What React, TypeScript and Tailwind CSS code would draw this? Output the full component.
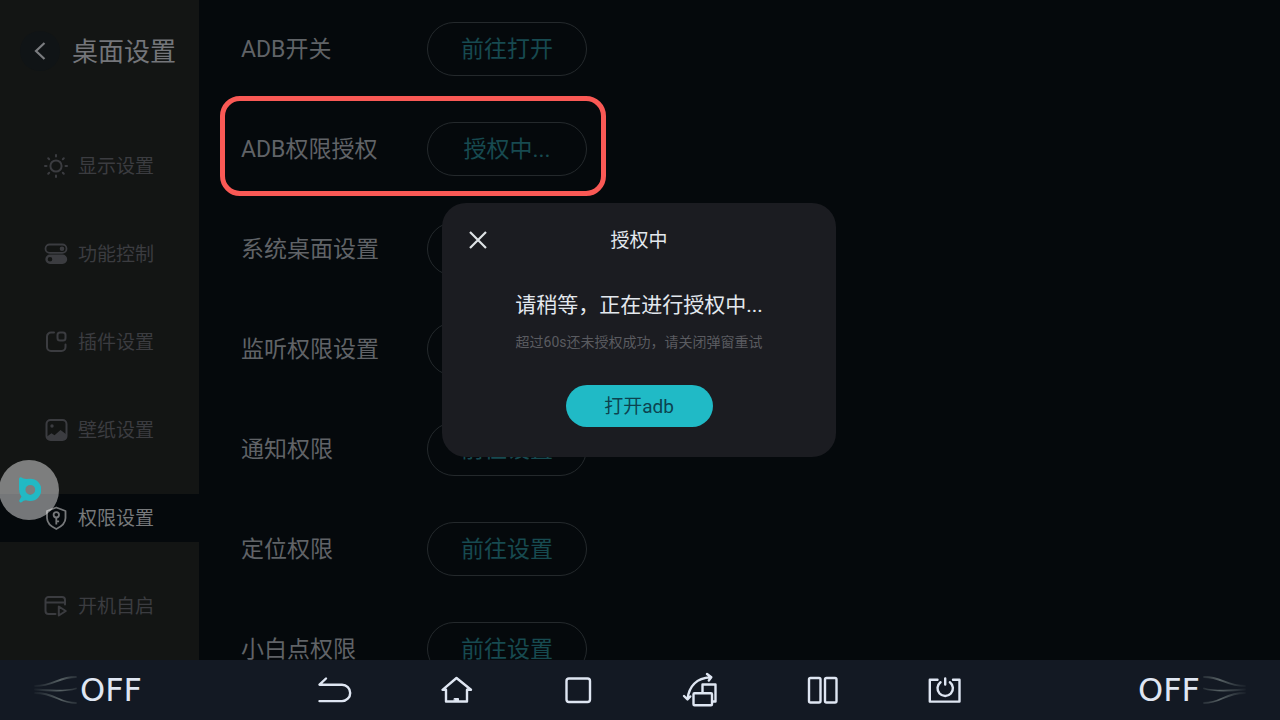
import type { ReactNode } from 'react'

function SunIcon() {
  return (
    <svg viewBox="0 0 24 24" className="size-6" fill="none" stroke="currentColor" strokeWidth="2" strokeLinecap="round">
      <circle cx="12" cy="12" r="5.6" />
      <path d="M12 1v1.5M12 21.5V23M1 12h1.5M21.5 12H23M4.2 4.2l1 1M18.8 18.8l1 1M4.2 19.8l1-1M18.8 5.2l1-1" />
    </svg>
  )
}

function TogglesIcon() {
  return (
    <svg viewBox="0 0 24 24" className="size-6" fill="none" stroke="currentColor" strokeWidth="1.8">
      <rect x="1.5" y="2.5" width="21" height="8.4" rx="4.2" />
      <circle cx="18" cy="6.7" r="1.4" fill="currentColor" />
      <path
        d="M6 12.600h12.500a4.700 4.700 0 0 1 0 9.400H6a4.700 4.700 0 0 1 0-9.400zM6 15a2.300 2.300 0 1 0 0 4.600a2.300 2.300 0 0 0 0-4.600z"
        fill="currentColor"
        fillRule="evenodd"
        stroke="none"
      />
    </svg>
  )
}

function PluginIcon() {
  return (
    <svg viewBox="0 0 24 24" className="size-6" fill="none" stroke="currentColor" strokeWidth="2" strokeLinecap="round">
      <path d="M10 2.5H7A4 4 0 0 0 3 6.500V17a4 4 0 0 0 4 4h10.500a4 4 0 0 0 4-4v-2.500" />
      <rect x="13.500" y="2.500" width="8" height="8" rx="2.500" />
    </svg>
  )
}

function WallpaperIcon() {
  return (
    <svg viewBox="0 0 24 24" className="size-6" fill="none" stroke="currentColor" strokeWidth="2">
      <rect x="2.500" y="2" width="20" height="20" rx="4" />
      <circle cx="8" cy="8" r="1.700" fill="currentColor" stroke="none" />
      <path d="M3 18.500l4.500-3.300 3 2 6-5.200 6 4.500V19a3 3 0 0 1-3 3H6a3 3 0 0 1-3-3z" fill="currentColor" stroke="none" />
    </svg>
  )
}

function ShieldIcon() {
  return (
    <svg viewBox="0 0 24 24" className="size-6" fill="none" stroke="currentColor" strokeWidth="1.800" strokeLinejoin="round">
      <path d="M12.300 1.500l9.200 3.500v7c0 5-4 8.500-9.200 11C7 20.500 3 17 3 12V5z" />
      <circle cx="12.300" cy="8.800" r="2.700" />
      <path d="M12.300 11.500v7M12.300 15.300h2.800" />
    </svg>
  )
}

function StartupIcon() {
  return (
    <svg viewBox="0 0 24 24" className="size-6" fill="none" stroke="currentColor" strokeWidth="2" strokeLinecap="round" strokeLinejoin="round">
      <path d="M11.500 20H4.500a3 3 0 0 1-3-3V6a3 3 0 0 1 3-3h13.500a3 3 0 0 1 3 3v4.500M1.500 8.500H21" />
      <path d="M14.800 12.500v9l7-4.500z" />
    </svg>
  )
}

const menu = [
  { label: '显示设置', icon: <SunIcon /> },
  { label: '功能控制', icon: <TogglesIcon /> },
  { label: '插件设置', icon: <PluginIcon /> },
  { label: '壁纸设置', icon: <WallpaperIcon /> },
  { label: '权限设置', icon: <ShieldIcon />, active: true },
  { label: '开机自启', icon: <StartupIcon /> },
]

const permissions = [
  { label: 'ADB开关', action: '前往打开' },
  { label: 'ADB权限授权', action: '授权中...', highlight: true },
  { label: '系统桌面设置', action: '前往设置' },
  { label: '监听权限设置', action: '前往设置' },
  { label: '通知权限', action: '前往设置' },
  { label: '定位权限', action: '前往设置' },
  { label: '小白点权限', action: '前往设置' },
]

function Sidebar() {
  return (
    <aside className="w-[199px] shrink-0 bg-[#131514]">
      <header className="flex h-[102px] items-center gap-3 pl-5">
        <button type="button" aria-label="返回" className="flex size-10 items-center justify-center rounded-full bg-[#101416] text-[#7b7d80]">
          <svg viewBox="0 0 20 20" className="size-5" fill="none" stroke="currentColor" strokeWidth="2.2">
            <path d="M14.500 2L6 10l8.500 8" />
          </svg>
        </button>
        <h1 className="pt-0.5 text-[26px] leading-8 text-[#74757a]">桌面设置</h1>
      </header>
      <ul className="mt-10 flex flex-col gap-10">
        {menu.map((item) => (
          <li key={item.label}>
            <button
              type="button"
              className={
                item.active
                  ? 'flex h-12 w-full items-center gap-2.5 bg-[#05090c] pl-11 text-[#77797b]'
                  : 'flex h-12 w-full items-center gap-2.5 pl-11 text-[#3b3c40]'
              }
            >
              {item.icon}
              <span className="pt-0.5 text-[19px] leading-6">{item.label}</span>
            </button>
          </li>
        ))}
      </ul>
    </aside>
  )
}

function PermissionList() {
  return (
    <section className="flex flex-1 flex-col items-start gap-[46px] overflow-hidden pt-[22px] pl-[42px]">
      {permissions.map((row) => (
        <div key={row.label} className="relative flex h-[54px] shrink-0 items-center">
          <span className="w-[186px] pt-0.5 text-[23px] leading-8 text-[#606367]">{row.label}</span>
          <button type="button" className="h-[54px] w-40 rounded-full border border-[#24292c] pt-0.5 text-[23px] leading-8 text-[#174a50]">
            {row.action}
          </button>
          {row.highlight && (
            <div className="pointer-events-none absolute -top-[26px] -right-[19px] -bottom-5 -left-[21px] rounded-[20px] border-5 border-[#fa5955]" />
          )}
        </div>
      ))}
    </section>
  )
}

function AuthDialog() {
  return (
    <div className="absolute inset-0 flex items-center justify-center pr-0.5">
      <div role="dialog" aria-labelledby="auth-title" className="flex w-[394px] flex-col items-center rounded-3xl bg-[#1b1c21] pb-[30px]">
        <div className="relative flex h-[74px] w-full items-center justify-center">
          <button type="button" aria-label="关闭" className="absolute left-[23px] p-1 text-[#dfe3e7]">
            <svg viewBox="0 0 18 18" className="size-[18px]" fill="none" stroke="currentColor" strokeWidth="2.2">
              <path d="M1 1l16 16M17 1L1 17" />
            </svg>
          </button>
          <h2 id="auth-title" className="pt-0.5 text-[19px] leading-7 text-[#e3e8ee]">授权中</h2>
        </div>
        <p className="mt-3.5 text-[21px] leading-7 text-[#e3e8ee]">请稍等，正在进行授权中...</p>
        <p className="mt-[13px] text-sm leading-5 text-[#5a5b60]">超过60s还未授权成功，请关闭弹窗重试</p>
        <button type="button" className="mt-[33px] h-[42px] w-[147px] rounded-full bg-[#20bac6] pt-0.5 text-[19px] leading-7 text-[#0c4350]">
          打开adb
        </button>
      </div>
    </div>
  )
}

function FloatingBall() {
  return (
    <button type="button" aria-label="悬浮球" className="absolute top-[460px] -left-px flex size-[60px] items-center justify-center rounded-full bg-white/45">
      <svg viewBox="0 0 24 26" className="h-[26px] w-6" fill="#22b9c4">
        <circle cx="13.300" cy="12.800" r="8" fill="none" stroke="#22b9c4" strokeWidth="6.200" />
        <path d="M2 2Q2 0 4 .3Q7 2.600 12 1.700L7 8L6 13.500L2 13z" />
        <path d="M4.500 19.500L10 23Q6 23.500 4.500 25.200Q2.300 26 2.200 23.500z" />
      </svg>
    </button>
  )
}

function Airflow({ flip = false }: { flip?: boolean }) {
  return (
    <svg viewBox="0 0 44 30" className={flip ? 'h-[30px] w-11 -scale-x-100' : 'h-[30px] w-11'} fill="none" strokeWidth="1.8" strokeLinecap="round">
      <defs>
        <linearGradient id={flip ? 'air-r' : 'air-l'} gradientUnits="userSpaceOnUse" x1="0" y1="0" x2="44" y2="0">
          <stop offset="0" stopColor="#4c565a" stopOpacity="0.1" />
          <stop offset="0.6" stopColor="#586265" />
          <stop offset="1" stopColor="#4c565a" stopOpacity="0.3" />
        </linearGradient>
      </defs>
      <g stroke={flip ? 'url(#air-r)' : 'url(#air-l)'}>
        <path d="M1 11C20 11 24 2 42 2" />
        <path d="M1 14.500C18 16 34 16 42 13.500" />
        <path d="M1 18C22 18 24 28 42 28" />
      </g>
    </svg>
  )
}

function NavIcon({ label, children }: { label: string; children: ReactNode }) {
  return (
    <button type="button" aria-label={label} className="flex flex-1 items-center justify-center">
      <svg viewBox="0 0 40 40" className="size-10" fill="none" stroke="currentColor" strokeWidth="2.4" strokeLinecap="round" strokeLinejoin="round">
        {children}
      </svg>
    </button>
  )
}

function BottomBar() {
  return (
    <nav className="flex h-[60px] shrink-0 items-center justify-between bg-[#131923] px-[34px] text-[#dfe6f2]">
      <button type="button" className="flex w-28 items-center gap-0.5">
        <Airflow />
        <span className="font-['DejaVu_Sans',sans-serif] text-[32px] leading-8">OFF</span>
      </button>
      <div className="flex max-w-[732px] flex-1">
        <NavIcon label="返回">
          <path d="M11 8.500L4.500 14.700H27a8.200 8.200 0 0 1 0 16.400H4.500" />
        </NavIcon>
        <NavIcon label="主页">
          <path d="M19.500 8L5.500 19.800H9V31.500h21V19.800h4z" />
          <path d="M17.500 28.500h4v3h-4z" fill="currentColor" strokeWidth="1" />
        </NavIcon>
        <NavIcon label="最近任务">
          <rect x="7.500" y="8.500" width="23.500" height="23.500" rx="2.500" />
        </NavIcon>
        <NavIcon label="旋转屏幕">
          <path d="M21.500 22V14.500H34.500V31.500H32" />
          <rect x="12.500" y="23.200" width="18.500" height="12" rx="1" />
          <path d="M6.500 29C8 17 15 8 29.500 7.300M26 4l4.300 3.300-2.500 3.200M3 26l3.500 3.500 2.800-3" />
        </NavIcon>
        <NavIcon label="分屏">
          <rect x="6" y="8" width="11.500" height="24.500" rx="1.500" />
          <rect x="22" y="8" width="11.500" height="24.500" rx="1.500" />
        </NavIcon>
        <NavIcon label="电源">
          <path d="M12.500 9.800H4.800v21.800h29.700V9.800h-6.500" />
          <path d="M15.500 12.200a7.700 7.700 0 1 0 9.400 0M20.200 8.500v6" />
        </NavIcon>
      </div>
      <button type="button" className="flex w-28 items-center justify-end gap-0.5">
        <span className="font-['DejaVu_Sans',sans-serif] text-[32px] leading-8">OFF</span>
        <Airflow flip />
      </button>
    </nav>
  )
}

export default function App() {
  return (
    <div className="relative flex h-screen flex-col overflow-hidden bg-[#05090c] font-[Roboto,'Noto_Sans_CJK_SC',sans-serif]">
      <main className="relative flex min-h-0 flex-1 overflow-hidden">
        <Sidebar />
        <PermissionList />
        <AuthDialog />
      </main>
      <BottomBar />
      <FloatingBall />
    </div>
  )
}
